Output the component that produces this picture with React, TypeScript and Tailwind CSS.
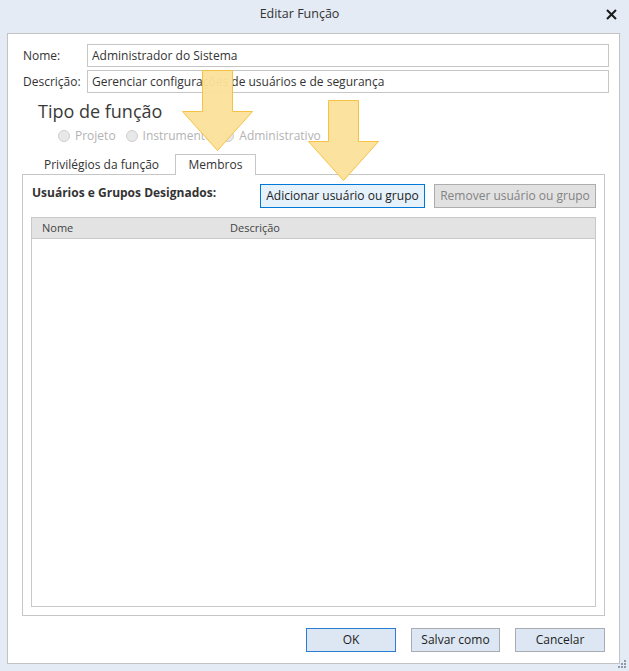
import React from "react";

const font = { fontFamily: '"Open Sans", "Noto Sans", sans-serif' };

function Arrow({ x, y }: { x: number; y: number }) {
  return (
    <svg
      className="absolute pointer-events-none"
      style={{ left: x, top: y }}
      width="72"
      height="84"
      viewBox="0 0 72 84"
    >
      <path
        d="M20.5 0.5 H50.5 V41.5 H70.5 L35.5 80.5 L0.5 41.5 H20.5 Z"
        fill="#fbe29b"
        fillOpacity="0.96"
        stroke="#f6c244"
        strokeWidth="1"
      />
    </svg>
  );
}

function Radio({ label }: { label: string }) {
  return (
    <div className="flex items-center gap-[5px]">
      <span className="w-[12px] h-[12px] rounded-full border border-[#cfcfcf] bg-[#e8e8e8]" />
      <span className="text-[#b3b3b3]">{label}</span>
    </div>
  );
}

export default function App() {
  return (
    <div
      className="relative w-[629px] h-[671px] bg-[#e4ebf5] flex flex-col text-[12px] text-[#333] overflow-hidden"
      style={font}
    >
      {/* Title bar */}
      <div className="h-[33px] flex items-center justify-center relative shrink-0 pr-[30px]">
        <span className="text-[12.5px] text-[#333] -mt-[4px]">Editar Função</span>
        <svg
          className="absolute right-[12px] top-[9px]"
          width="11"
          height="11"
          viewBox="0 0 11 11"
        >
          <path d="M1 1 L10 10 M10 1 L1 10" stroke="#1a1a1a" strokeWidth="2" />
        </svg>
      </div>

      {/* White panel */}
      <div className="ml-[7px] mr-[9px] mb-[7px] flex-1 bg-white border border-[#c3c3c3] flex flex-col pt-[10px] px-[14px] pb-[11px]">
        <div className="flex flex-col gap-[3px] pl-[1px]">
          <div className="flex items-center h-[23px]">
            <span className="w-[64px] shrink-0">Nome:</span>
            <div className="flex-1 h-[23px] border border-[#c6c6c6] flex items-center px-[4px] mr-[-4px]">
              Administrador do Sistema
            </div>
          </div>
          <div className="flex items-center h-[23px]">
            <span className="w-[64px] shrink-0">Descrição:</span>
            <div className="flex-1 h-[23px] border border-[#c6c6c6] flex items-center px-[4px] mr-[-4px]">
              Gerenciar configurações de usuários e de segurança
            </div>
          </div>
        </div>

        <div className="mt-[7px] ml-[16px] text-[18px] leading-[22px] text-[#3a3a3a]">
          Tipo de função
        </div>

        <div className="mt-[6px] ml-[36px] flex items-center gap-[10px] h-[16px]">
          <Radio label="Projeto" />
          <Radio label="Instrumento" />
          <Radio label="Administrativo" />
        </div>

        {/* Tabs */}
        <div className="mt-[10px] flex items-end h-[21px] relative z-10">
          <div className="w-[153px] h-[20px] flex items-center pl-[22px]">
            Privilégios da função
          </div>
          <div className="w-[81px] h-[21px] border border-b-0 border-[#c6c6c6] bg-white flex items-center justify-center">
            Membros
          </div>
        </div>
        <div className="-mt-[1px] border border-[#c6c6c6] flex-1 flex flex-col px-[8px] pt-[9px] pb-[8px]">
          <div className="flex items-center h-[24px]">
            <span className="font-bold text-[#333] pl-[1px] w-[229px] -mt-[6px]">
              Usuários e Grupos Designados:
            </span>
            <button className="h-[24px] w-[165px] border border-[#0078d7] bg-[#e5f1fb] text-[#222]">
              Adicionar usuário ou grupo
            </button>
            <button className="ml-[9px] h-[24px] w-[162px] border border-[#adadad] bg-[#e1e1e1] text-[#838383]">
              Remover usuário ou grupo
            </button>
          </div>
          <div className="mt-[9px] flex-1 border border-[#c8c8c8] flex flex-col">
            <div className="h-[21px] bg-[#e3e3e3] border-b border-[#c8c8c8] flex items-center text-[11px] text-[#444]">
              <span className="w-[198px] pl-[10px]">Nome</span>
              <span>Descrição</span>
            </div>
          </div>
        </div>

        <div className="mt-[12px] flex justify-end gap-[15px]">
          <button className="h-[24px] w-[90px] border border-[#2b7dd3] bg-[#dce7f3] text-[#222]">
            OK
          </button>
          <button className="h-[24px] w-[89px] border border-[#a8acb2] bg-[#dce7f3] text-[#222]">
            Salvar como
          </button>
          <button className="h-[24px] w-[90px] border border-[#a8acb2] bg-[#dce7f3] text-[#222]">
            Cancelar
          </button>
        </div>
      </div>

      {/* resize grip */}
      <svg className="absolute right-[2px] bottom-[2px]" width="10" height="10" viewBox="0 0 10 10">
        <g fill="#8a9bb0">
          <rect x="7" y="1" width="2" height="2" />
          <rect x="4" y="4" width="2" height="2" />
          <rect x="7" y="4" width="2" height="2" />
          <rect x="1" y="7" width="2" height="2" />
          <rect x="4" y="7" width="2" height="2" />
          <rect x="7" y="7" width="2" height="2" />
        </g>
      </svg>

      <Arrow x={182} y={70} />
      <Arrow x={308} y={100} />
    </div>
  );
}
